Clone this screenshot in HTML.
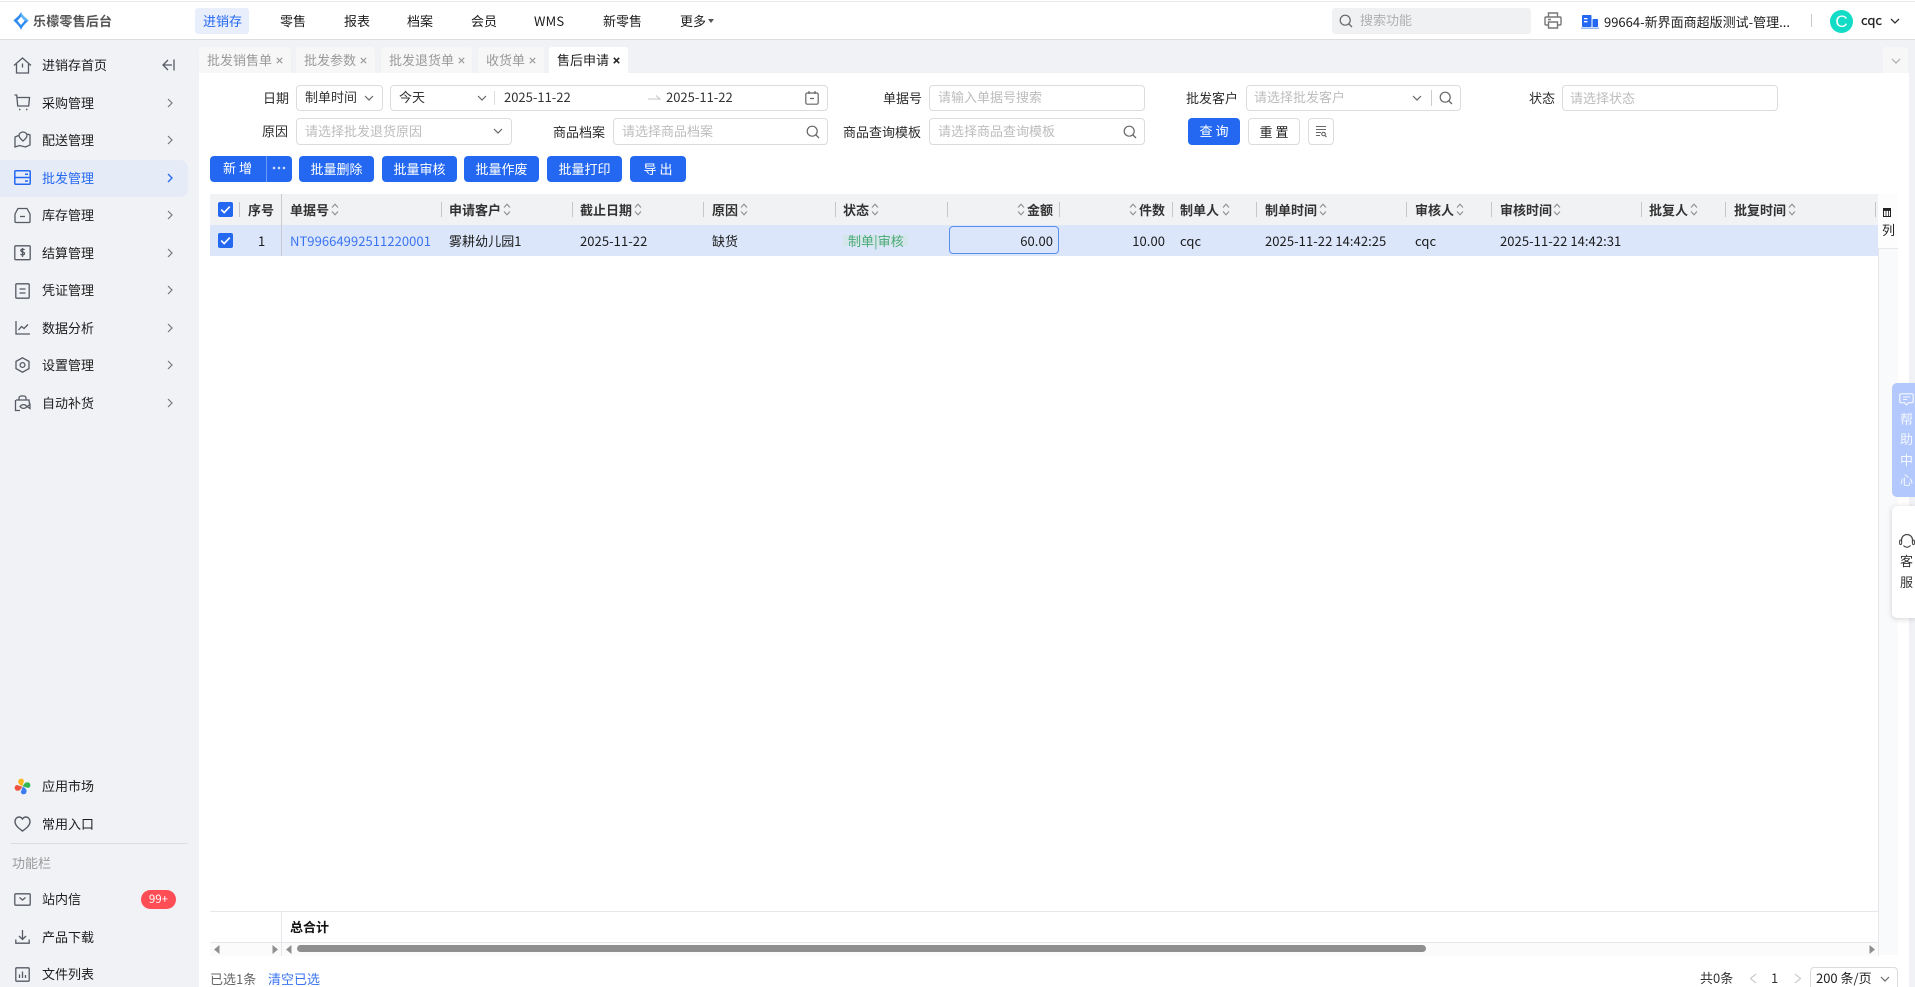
<!DOCTYPE html>
<html lang="zh-CN"><head><meta charset="utf-8"><title>售后申请</title>
<style>
html,body{margin:0;padding:0;width:1915px;height:987px;overflow:hidden;background:#fff}
body{position:relative;font-family:"Liberation Sans","Noto Sans CJK SC",sans-serif;font-size:13px;color:#222}
.n{font-family:"Noto Sans CJK SC","Liberation Sans",sans-serif}
*{box-sizing:border-box}
.a{position:absolute}
.t{position:absolute;white-space:nowrap;line-height:20px;font-size:13px;font-family:"Noto Sans CJK SC","Liberation Sans",sans-serif;color:#1c1c1c}
.ph{color:#bdbdbd}
.lb{color:#2c2c2c}
.box{position:absolute;background:#fff;border:1px solid #dcdcdc;border-radius:4px;height:27px}
.tab{position:absolute;top:47px;height:26px;background:#f7f7f8;border-radius:3px 3px 0 0;color:#9a9a9a;font-size:13px;line-height:25px;font-family:"Noto Sans CJK SC",sans-serif;padding-left:8px;white-space:nowrap}
.tab svg{display:inline-block;margin-left:4px;vertical-align:1.5px}
.btn{position:absolute;top:156px;height:26px;background:#2468f2;border-radius:4px;color:#fff;text-align:center;line-height:25px;font-family:"Noto Sans CJK SC",sans-serif;font-size:13px}
.h{position:absolute;top:200px;line-height:20px;font-size:13px;font-weight:700;color:#333;white-space:nowrap;font-family:"Noto Sans CJK SC",sans-serif}
.s{position:absolute;top:202px;width:1px;height:15px;background:#c4c6c9}
.so{position:absolute;top:202px;width:8px;height:15px}
.r{position:absolute;top:231px;line-height:20px;font-size:13px;color:#1c1c1c;white-space:nowrap;letter-spacing:.06px;font-family:"Noto Sans CJK SC",sans-serif}
.ic{position:absolute;fill:none;stroke:#555a64;stroke-width:1.3}
</style></head><body>
<svg width="0" height="0" style="position:absolute"><defs>
<symbol id="sort" viewBox="0 0 8 15"><path d="M1 5.500 4 2.200 7 5.500M1 9.500 4 12.800 7 9.500" fill="none" stroke="#8d8f93" stroke-width="1.100"/></symbol>
<symbol id="chk" viewBox="0 0 15 15"><rect width="15" height="15" rx="2" fill="#2468f2"/><path d="M3.200 7.600 6.200 10.600 11.800 4.600" fill="none" stroke="#fff" stroke-width="1.600"/></symbol>
<symbol id="search" viewBox="0 0 14 14"><circle cx="6.200" cy="6.200" r="5" fill="none" stroke="#666" stroke-width="1.200"/><path d="M9.800 9.800 13 13" stroke="#666" stroke-width="1.300"/></symbol>
<symbol id="right" viewBox="0 0 6 10"><path d="M1 1 5 5 1 9" fill="none" stroke="#777" stroke-width="1.200"/></symbol>
<symbol id="down" viewBox="0 0 10 6"><path d="M1 1 5 5 9 1" fill="none" stroke="#666" stroke-width="1.200"/></symbol>
<symbol id="x" viewBox="0 0 7 7"><path d="M.8 .8 6.200 6.200M6.200 .8 .8 6.200" fill="none" stroke="#9a9a9a" stroke-width="1.100"/></symbol>
<symbol id="xa" viewBox="0 0 7 7"><path d="M.8 .8 6.200 6.200M6.200 .8 .8 6.200" fill="none" stroke="#222" stroke-width="1.500"/></symbol>
</defs></svg>

<!-- top bar -->
<div class="a" style="left:0;top:1px;width:1915px;height:1px;background:#e8e8e8"></div>
<div class="a" style="left:0;top:39px;width:1915px;height:1px;background:#dcdddf"></div>
<div class="a" style="left:0;top:40px;width:1915px;height:947px;background:#f1f2f5"></div>
<svg class="a" style="left:13px;top:12px" width="16" height="18" viewBox="0 0 16 18"><path d="M8 0C9 3 13 6 15.500 8.500 13 11 9.500 14 8 18 6.500 14 3 11 .5 8.500 3 6 7 3 8 0Z" fill="#2f8bf0"/><path d="M8 4.800 11.600 8.800 8 13 4.400 8.800Z" fill="#fff"/><path d="M8 0C9 3 13 6 15.500 8.500L11.600 8.800 8 4.800Z" fill="#63b6f8"/></svg>
<div class="t" style="left:33px;top:11px;font-weight:700;color:#555;letter-spacing:.2px">乐檬零售后台</div>
<div class="a" style="left:195px;top:8px;width:54px;height:26px;background:#e8eefc;border-radius:3px"></div>
<div class="t" style="left:203px;top:11px;color:#2468f2">进销存</div>
<div class="t" style="left:280px;top:11px">零售</div>
<div class="t" style="left:344px;top:11px">报表</div>
<div class="t" style="left:407px;top:11px">档案</div>
<div class="t" style="left:471px;top:11px">会员</div>
<div class="t" style="left:534px;top:11px;letter-spacing:.2px">WMS</div>
<div class="t" style="left:603px;top:11px">新零售</div>
<div class="t" style="left:680px;top:11px">更多</div>
<svg class="a" style="left:708px;top:19px" width="6" height="4"><path d="M0 0H6L3 4Z" fill="#555"/></svg>
<div class="a" style="left:1332px;top:8px;width:199px;height:26px;background:#f0f1f3;border-radius:3px"></div>
<svg class="a" style="left:1339px;top:14px" width="14" height="14"><use href="#search"/></svg>
<div class="t ph" style="left:1360px;top:10px;color:#b0b0b0">搜索功能</div>
<svg class="ic" style="left:1544px;top:12px;stroke:#777;stroke-width:1.400" width="18" height="17" viewBox="0 0 18 17"><path d="M4.500 5V1h9v4M4 13H2a1 1 0 0 1-1-1V6a1 1 0 0 1 1-1h14a1 1 0 0 1 1 1v6a1 1 0 0 1-1 1h-2"/><path d="M4.500 10h9v6h-9zM4 7.500h3"/></svg>
<svg class="a" style="left:1581px;top:15px" width="18" height="14" viewBox="0 0 18 14"><rect x="1" y="0" width="9.500" height="12" rx="1" fill="#2468f2"/><rect x="11.500" y="4" width="5.500" height="8" rx=".8" fill="#2468f2"/><rect x="3" y="3" width="3.500" height="1.300" fill="#fff"/><rect x="3" y="6" width="3.500" height="1.300" fill="#fff"/><rect x="0" y="12.500" width="18" height="1.400" fill="#8fb3f8"/></svg>
<div class="t" style="left:1604px;top:12px;color:#1c1c1c">99664-新界面商超版测试-管理...</div>
<div class="a" style="left:1811px;top:14px;width:1px;height:13px;background:#c9c9c9"></div>
<div class="a" style="left:1830px;top:10px;width:23px;height:23px;border-radius:50%;background:#12dcc6;color:#fff;text-align:center;font-size:17px;line-height:24px">C</div>
<div class="t" style="left:1861px;top:10px;color:#222;-webkit-text-stroke:.3px #222">cqc</div>
<svg class="a" style="left:1890px;top:18px" width="10" height="6" viewBox="0 0 10 6"><path d="M1 1 5 5 9 1" fill="none" stroke="#333" stroke-width="1.300"/></svg>

<!-- sidebar -->
<div class="a" style="left:0;top:160px;width:188px;height:37px;background:#e6ebf8;border-radius:0 8px 8px 0"></div>
<svg class="ic" style="left:13px;top:57px" width="19" height="17" viewBox="0 0 19 17"><path d="M1 8.500 9.500 1 18 8.500M3.500 7v9h12V7M9.500 6.500v4"/></svg>
<div class="t" style="left:42px;top:55px">进销存首页</div>
<svg class="ic" style="left:162px;top:58px" width="13" height="14" viewBox="0 0 13 14"><path d="M6 2 1 7l5 5M1 7h9M12 1.500v11"/></svg>
<svg class="ic" style="left:14px;top:94px" width="17" height="17" viewBox="0 0 17 17"><path d="M.5 1H2.700l1 11h11l.8-8.500H3"/><path d="M5 15.500h1.400M12 15.500h1.400" stroke-width="1.500"/></svg>
<div class="t" style="left:42px;top:93px">采购管理</div>
<svg class="ic" style="left:14px;top:131px" width="17" height="17" viewBox="0 0 17 17"><path d="M4.500 4.500 1 6v10l4.500-1.500 6 1.500L16 14V4l-2.500-1"/><path d="M9 1c2.500 0 4 1.700 4 3.500 0 2-2.200 4-4 5.500-1.800-1.500-4-3.500-4-5.500C5 2.700 6.500 1 9 1z"/></svg>
<div class="t" style="left:42px;top:130px">配送管理</div>
<svg class="ic" style="left:14px;top:170px;stroke:#2468f2;stroke-width:1.500" width="17" height="15" viewBox="0 0 17 15"><rect x=".8" y=".8" width="15.400" height="13.400" rx="1"/><path d="M.8 7.500h15.400M11 4.200h3M11 11h3"/></svg>
<div class="t" style="left:42px;top:168px;color:#2468f2">批发管理</div>
<svg class="ic" style="left:14px;top:207px" width="17" height="17" viewBox="0 0 17 17"><path d="M4 1.500h9L16 7v7.500a1 1 0 0 1-1 1H2a1 1 0 0 1-1-1V7z"/><path d="M6 9.500h5"/></svg>
<div class="t" style="left:42px;top:205px">库存管理</div>
<svg class="ic" style="left:14px;top:245px" width="17" height="16" viewBox="0 0 17 16"><rect x=".8" y=".8" width="15.400" height="13.900" rx="1"/><path d="M10.500 5C10 4 7 3.800 6.800 5.400c-.2 1.700 3.700 1.300 3.700 3.100 0 1.700-3.400 1.600-4 .5M8.500 3v9"/></svg>
<div class="t" style="left:42px;top:243px">结算管理</div>
<svg class="ic" style="left:15px;top:283px" width="15" height="16" viewBox="0 0 15 16"><rect x=".8" y=".8" width="13.400" height="14.400" rx="1"/><path d="M4.500 6h6M4.500 10h6"/></svg>
<div class="t" style="left:42px;top:280px">凭证管理</div>
<svg class="ic" style="left:15px;top:320px" width="15" height="15" viewBox="0 0 15 15"><path d="M1 1v13h14M3.500 10l3-3.500 2.500 2L13 4.500"/></svg>
<div class="t" style="left:42px;top:318px">数据分析</div>
<svg class="ic" style="left:15px;top:357px" width="15" height="16" viewBox="0 0 15 16"><path d="M7.500 .8 14 4.400v7.200L7.500 15.200 1 11.600V4.400z"/><circle cx="7.500" cy="8" r="2.400"/></svg>
<div class="t" style="left:42px;top:355px">设置管理</div>
<svg class="ic" style="left:14px;top:395px" width="17" height="17" viewBox="0 0 17 17"><path d="M5 5V3a2 2 0 0 1 2-2h3a2 2 0 0 1 2 2v2M2 5h13l.5 4M1.500 5v10.500H6M6 11.500c2-2.500 5-2.500 7 0-2 2.500-5 2.500-7 0z"/><path d="M13 11.500l3-2v4z"/></svg>
<div class="t" style="left:42px;top:393px">自动补货</div>
<svg class="a" style="left:167px;top:98px" width="6" height="10"><use href="#right"/></svg>
<svg class="a" style="left:167px;top:135px" width="6" height="10"><use href="#right"/></svg>
<svg class="a" style="left:167px;top:173px" width="6" height="10" viewBox="0 0 6 10"><path d="M1 1 5 5 1 9" fill="none" stroke="#2468f2" stroke-width="1.300"/></svg>
<svg class="a" style="left:167px;top:210px" width="6" height="10"><use href="#right"/></svg>
<svg class="a" style="left:167px;top:248px" width="6" height="10"><use href="#right"/></svg>
<svg class="a" style="left:167px;top:285px" width="6" height="10"><use href="#right"/></svg>
<svg class="a" style="left:167px;top:323px" width="6" height="10"><use href="#right"/></svg>
<svg class="a" style="left:167px;top:360px" width="6" height="10"><use href="#right"/></svg>
<svg class="a" style="left:167px;top:398px" width="6" height="10"><use href="#right"/></svg>

<svg class="a" style="left:14px;top:778px" width="17" height="17" viewBox="0 0 17 17"><path d="M8.200 8.200C5 7 3 4 5 1.500c2-1.500 4.500-1 5 1.500z" fill="#f9b81f"/><path d="M8.800 8.200C10 5 13 3 15.500 5c1.500 2 1 4.500-1.500 5z" fill="#33b552"/><path d="M8.800 8.800c3.200 1.200 5 4.200 3 6.700-2 1.500-4.500 1-5-1.500z" fill="#3d7df2"/><path d="M8.200 8.800C7 12 4 14 1.500 12-.0 10 .5 7.500 3 7z" fill="#f0523f"/></svg>
<div class="t" style="left:42px;top:776px">应用市场</div>
<svg class="ic" style="left:14px;top:816px;stroke-width:1.400" width="17" height="16" viewBox="0 0 17 16"><path d="M8.500 15C5 12.500 1 9.500 1 5.500 1 2.800 3 1 5 1c1.500 0 2.700.8 3.500 2C9.300 1.800 10.500 1 12 1c2 0 4 1.800 4 4.500 0 4-4 7-7.500 9.500z"/></svg>
<div class="t" style="left:42px;top:814px">常用入口</div>
<div class="a" style="left:11px;top:843px;width:177px;height:1px;background:#dcdde0"></div>
<div class="t" style="left:12px;top:853px;color:#999">功能栏</div>
<svg class="ic" style="left:14px;top:893px" width="17" height="13" viewBox="0 0 17 13"><rect x=".8" y=".8" width="15.400" height="11.400" rx="1"/><path d="M5.500 4.500 8.500 7l3-2.500"/></svg>
<div class="t" style="left:42px;top:889px">站内信</div>
<div class="a n" style="left:141px;top:890px;width:35px;height:19px;background:#ff4d55;border-radius:10px;color:#fff;font-size:11.500px;line-height:18px;text-align:center">99+</div>
<svg class="ic" style="left:15px;top:930px" width="15" height="14" viewBox="0 0 15 14"><path d="M7.500 0v9M4 6l3.500 3.500L11 6M.8 9.500v3.700h13.400V9.500"/></svg>
<div class="t" style="left:42px;top:927px">产品下载</div>
<svg class="ic" style="left:15px;top:967px" width="15" height="15" viewBox="0 0 15 15"><rect x=".8" y=".8" width="13.400" height="13.400" rx="1"/><path d="M4.500 11V7.500M7.500 11V4.500M10.500 11V8"/></svg>
<div class="t" style="left:42px;top:964px">文件列表</div>

<!-- content -->
<div class="a" style="left:199px;top:73px;width:1710px;height:914px;background:#fff"></div>
<div class="tab" style="left:199px;width:92px">批发销售单<svg width="7" height="7"><use href="#x"/></svg></div>
<div class="tab" style="left:296px;width:79px">批发参数<svg width="7" height="7"><use href="#x"/></svg></div>
<div class="tab" style="left:381px;width:91px">批发退货单<svg width="7" height="7"><use href="#x"/></svg></div>
<div class="tab" style="left:478px;width:66px">收货单<svg width="7" height="7"><use href="#x"/></svg></div>
<div class="tab" style="left:549px;width:79px;background:#fff;color:#222">售后申请<svg width="7" height="7"><use href="#xa"/></svg></div>
<div class="a" style="left:1883px;top:47px;width:25px;height:26px;background:#f7f7f8;border-radius:3px 3px 0 0"></div>
<svg class="a" style="left:1891px;top:58px" width="10" height="6" viewBox="0 0 10 6"><path d="M1 1 5 5 9 1" fill="none" stroke="#aaa" stroke-width="1.200"/></svg>

<!-- filters row 1 -->
<div class="t lb" style="left:263px;top:88px">日期</div>
<div class="box" style="left:296px;top:85px;width:87px;height:26px"></div>
<div class="t" style="left:305px;top:87px;color:#333">制单时间</div>
<svg class="a" style="left:364px;top:95px" width="10" height="6"><use href="#down"/></svg>
<div class="box" style="left:390px;top:85px;width:438px;height:26px"></div>
<div class="t" style="left:399px;top:87px;color:#333">今天</div>
<svg class="a" style="left:477px;top:95px" width="10" height="6"><use href="#down"/></svg>
<div class="a" style="left:494px;top:91px;width:1px;height:14px;background:#ddd"></div>
<div class="t" style="left:504px;top:87px;color:#333">2025-11-22</div>
<svg class="a" style="left:648px;top:94px" width="13" height="7"><path d="M0 5H12L8 1.500" fill="none" stroke="#c5c5c5" stroke-width="1"/></svg>
<div class="t" style="left:666px;top:87px;color:#333">2025-11-22</div>
<svg class="ic" style="left:805px;top:91px;stroke:#666;stroke-width:1.200" width="14" height="14" viewBox="0 0 14 14"><rect x=".8" y="2" width="12.400" height="11.200" rx="1.500"/><path d="M4 0v3M10 0v3M5 7.500h4"/></svg>
<div class="t lb" style="left:883px;top:88px">单据号</div>
<div class="box" style="left:929px;top:85px;width:216px;height:26px"></div>
<div class="t ph" style="left:938px;top:87px">请输入单据号搜索</div>
<div class="t lb" style="left:1186px;top:88px">批发客户</div>
<div class="box" style="left:1246px;top:85px;width:215px;height:26px"></div>
<div class="t ph" style="left:1254px;top:87px">请选择批发客户</div>
<svg class="a" style="left:1412px;top:95px" width="10" height="6"><use href="#down"/></svg>
<div class="a" style="left:1431px;top:90px;width:1px;height:16px;background:#ccc"></div>
<svg class="a" style="left:1439px;top:91px" width="14" height="14"><use href="#search"/></svg>
<div class="t lb" style="left:1529px;top:88px">状态</div>
<div class="box" style="left:1562px;top:85px;width:216px;height:26px"></div>
<div class="t ph" style="left:1570px;top:88px">请选择状态</div>

<!-- filters row 2 -->
<div class="t lb" style="left:262px;top:121px">原因</div>
<div class="box" style="left:296px;top:118px;width:216px"></div>
<div class="t ph" style="left:305px;top:121px">请选择批发退货原因</div>
<svg class="a" style="left:493px;top:128px" width="10" height="6"><use href="#down"/></svg>
<div class="t lb" style="left:553px;top:122px">商品档案</div>
<div class="box" style="left:613px;top:118px;width:215px"></div>
<div class="t ph" style="left:622px;top:121px">请选择商品档案</div>
<svg class="a" style="left:806px;top:125px" width="14" height="14"><use href="#search"/></svg>
<div class="t lb" style="left:843px;top:122px">商品查询模板</div>
<div class="box" style="left:929px;top:118px;width:216px"></div>
<div class="t ph" style="left:938px;top:121px">请选择商品查询模板</div>
<svg class="a" style="left:1123px;top:125px" width="14" height="14"><use href="#search"/></svg>
<div class="btn" style="left:1188px;top:118px;width:52px;height:27px;line-height:26px;letter-spacing:3px;text-indent:3px">查询</div>
<div class="box" style="left:1248px;top:118px;width:52px;text-align:center;line-height:25px;color:#222;letter-spacing:3px;text-indent:3px;font-family:'Noto Sans CJK SC',sans-serif">重置</div>
<div class="box" style="left:1308px;top:118px;width:26px"></div>
<svg class="a" style="left:1315px;top:125px" width="12" height="13" viewBox="0 0 12 13"><path d="M1 1.500h10M1 4.500h10M1 7.500h5M1 10.500h4" stroke="#666" stroke-width="1" fill="none"/><circle cx="8.500" cy="9" r="1.800" fill="none" stroke="#555"/><path d="M10 10.500 11.500 12" stroke="#555"/></svg>

<!-- action buttons -->
<div class="btn" style="left:210px;width:82px"></div>
<div class="t" style="left:223px;top:158px;color:#fff;letter-spacing:3px">新增</div>
<div class="a" style="left:266px;top:156px;width:1px;height:26px;background:#6d9bf6"></div>
<div class="a" style="left:272px;top:166px;width:14px;height:4px;background:radial-gradient(circle at 2px 2px,#cfdcfb 1.200px,transparent 1.400px) 0 0/5px 4px"></div>
<div class="btn" style="left:299px;width:75px">批量删除</div>
<div class="btn" style="left:382px;width:75px">批量审核</div>
<div class="btn" style="left:464px;width:75px">批量作废</div>
<div class="btn" style="left:547px;width:75px">批量打印</div>
<div class="btn" style="left:630px;width:56px;letter-spacing:3px;text-indent:3px">导出</div>

<!-- table -->
<div class="a" style="left:210px;top:194px;width:1668px;height:31px;background:#f1f2f4"></div>
<div class="a" style="left:210px;top:225px;width:1668px;height:31px;background:#dbe6fb"></div>
<div class="a" style="left:1878px;top:194px;width:20px;height:761px;background:#f9fafc;border-left:1px solid #e4e5e8"></div>
<div class="a" style="left:1878px;top:194px;width:20px;height:55px;background:#fdfdfe;border-bottom:1px solid #e6e7ea"></div>
<div class="a" style="left:281px;top:194px;width:1px;height:62px;background:#c9cbd0"></div>
<svg class="a" style="left:218px;top:202px" width="15" height="15"><use href="#chk"/></svg>
<svg class="a" style="left:218px;top:233px" width="15" height="15"><use href="#chk"/></svg>
<div class="s" style="left:239px"></div>
<div class="h" style="left:248px">序号</div>
<div class="h" style="left:290px">单据号</div><svg class="so" style="left:331px"><use href="#sort"/></svg>
<div class="s" style="left:441px"></div>
<div class="h" style="left:449px">申请客户</div><svg class="so" style="left:503px"><use href="#sort"/></svg>
<div class="s" style="left:572px"></div>
<div class="h" style="left:580px">截止日期</div><svg class="so" style="left:634px"><use href="#sort"/></svg>
<div class="s" style="left:703px"></div>
<div class="h" style="left:712px">原因</div><svg class="so" style="left:740px"><use href="#sort"/></svg>
<div class="s" style="left:835px"></div>
<div class="h" style="left:843px">状态</div><svg class="so" style="left:871px"><use href="#sort"/></svg>
<div class="s" style="left:947px"></div>
<svg class="so" style="left:1017px"><use href="#sort"/></svg><div class="h" style="left:1027px">金额</div>
<div class="s" style="left:1059px"></div>
<svg class="so" style="left:1129px"><use href="#sort"/></svg><div class="h" style="left:1139px">件数</div>
<div class="s" style="left:1172px"></div>
<div class="h" style="left:1180px">制单人</div><svg class="so" style="left:1222px"><use href="#sort"/></svg>
<div class="s" style="left:1256px"></div>
<div class="h" style="left:1265px">制单时间</div><svg class="so" style="left:1319px"><use href="#sort"/></svg>
<div class="s" style="left:1406px"></div>
<div class="h" style="left:1415px">审核人</div><svg class="so" style="left:1456px"><use href="#sort"/></svg>
<div class="s" style="left:1491px"></div>
<div class="h" style="left:1500px">审核时间</div><svg class="so" style="left:1553px"><use href="#sort"/></svg>
<div class="s" style="left:1641px"></div>
<div class="h" style="left:1649px">批复人</div><svg class="so" style="left:1690px"><use href="#sort"/></svg>
<div class="s" style="left:1725px"></div>
<div class="h" style="left:1734px">批复时间</div><svg class="so" style="left:1788px"><use href="#sort"/></svg>
<div class="s" style="left:1875px"></div>
<svg class="a" style="left:1883px;top:208px" width="8" height="9" viewBox="0 0 8 9"><rect x=".5" y=".5" width="7" height="8" fill="#fff" stroke="#222"/><path d="M0 .5h8v2H0zM3 0v9M5.500 0v9" stroke="#222" stroke-width=".8" fill="#222"/></svg>
<div class="t" style="left:1882px;top:220px">列</div>

<div class="r" style="left:258px">1</div>
<div class="r" style="left:290px;color:#3b74f0">NT99664992511220001</div>
<div class="r" style="left:449px">雾耕幼儿园1</div>
<div class="r" style="left:580px">2025-11-22</div>
<div class="r" style="left:712px">缺货</div>
<div class="a" style="left:843px;top:235px;width:65px;height:11px;background:#d5e6ea"></div>
<div class="r" style="left:848px;color:#4aa97c">制单|审核</div>
<div class="a" style="left:949px;top:226px;width:110px;height:28px;border:1px solid #5a8eee;border-radius:4px"></div>
<div class="r" style="right:862px">60.00</div>
<div class="r" style="right:750px">10.00</div>
<div class="r" style="left:1180px">cqc</div>
<div class="r" style="left:1265px">2025-11-22 14:42:25</div>
<div class="r" style="left:1415px">cqc</div>
<div class="r" style="left:1500px">2025-11-22 14:42:31</div>

<!-- totals -->
<div class="a" style="left:210px;top:911px;width:1668px;height:1px;background:#e6e7ea"></div>
<div class="a" style="left:210px;top:942px;width:1668px;height:1px;background:#e6e7ea"></div>
<div class="a" style="left:281px;top:911px;width:1px;height:45px;background:#e6e7ea"></div>
<div class="a" style="left:1878px;top:911px;width:1px;height:45px;background:#e6e7ea"></div>
<div class="t" style="left:290px;top:917px;font-weight:700;color:#111">总合计</div>
<div class="a" style="left:210px;top:943px;width:71px;height:13px;background:#fbfbfb"></div>
<div class="a" style="left:282px;top:943px;width:1596px;height:13px;background:#fbfbfb"></div>
<svg class="a" style="left:214px;top:945px" width="6" height="9"><path d="M5.500 0V9L0 4.500Z" fill="#8f8f8f"/></svg>
<svg class="a" style="left:272px;top:945px" width="6" height="9"><path d="M.5 0V9L6 4.500Z" fill="#8f8f8f"/></svg>
<svg class="a" style="left:286px;top:945px" width="6" height="9"><path d="M5.500 0V9L0 4.500Z" fill="#8f8f8f"/></svg>
<div class="a" style="left:297px;top:945px;width:1129px;height:7px;background:#8f8f8f;border-radius:4px"></div>
<svg class="a" style="left:1869px;top:945px" width="6" height="9"><path d="M.5 0V9L6 4.500Z" fill="#8f8f8f"/></svg>

<!-- footer -->
<div class="t" style="left:210px;top:969px;color:#666">已选1条</div>
<div class="t" style="left:268px;top:969px;color:#3b74f0">清空已选</div>
<div class="t" style="left:1700px;top:968px;color:#333">共0条</div>
<svg class="a" style="left:1749px;top:973px" width="8" height="11"><path d="M7 1 1.500 5.500 7 10" fill="none" stroke="#c4c4c4" stroke-width="1.100"/></svg>
<div class="t" style="left:1771px;top:968px;color:#333">1</div>
<svg class="a" style="left:1794px;top:973px" width="8" height="11"><path d="M1 1 6.500 5.500 1 10" fill="none" stroke="#c4c4c4" stroke-width="1.100"/></svg>
<div class="a" style="left:1810px;top:967px;width:88px;height:26px;background:#fff;border:1px solid #dcdcdc;border-radius:4px"></div>
<div class="t" style="left:1816px;top:968px;color:#222">200 条/页</div>
<svg class="a" style="left:1880px;top:976px" width="10" height="6"><use href="#down"/></svg>

<!-- floating -->
<div class="a" style="left:1892px;top:383px;width:23px;height:114px;background:#b3c8fd;border-radius:5px 0 0 5px"></div>
<svg class="a" style="left:1899px;top:393px" width="15" height="13" viewBox="0 0 15 13"><path d="M2 .8h11a1.200 1.200 0 0 1 1.200 1.200v6.500a1.200 1.200 0 0 1-1.200 1.200H9.500L7.500 12 5.500 9.700H2A1.200 1.200 0 0 1 .8 8.500V2A1.200 1.200 0 0 1 2 .8z" fill="none" stroke="#f4f7ff" stroke-width="1.200"/><path d="M4 4h7M4 6.500h4" stroke="#f4f7ff" stroke-width="1.100"/></svg>
<div class="t" style="left:1900px;top:409px;color:#f4f7ff">帮</div>
<div class="t" style="left:1900px;top:429px;color:#f4f7ff">助</div>
<div class="t" style="left:1900px;top:450px;color:#f4f7ff">中</div>
<div class="t" style="left:1900px;top:470px;color:#f4f7ff">心</div>
<div class="a" style="left:1892px;top:506px;width:23px;height:112px;background:#fff;border-radius:5px 0 0 5px;box-shadow:0 1px 6px rgba(0,0,0,.18)"></div>
<svg class="a" style="left:1899px;top:534px" width="16" height="16" viewBox="0 0 16 16"><path d="M2.500 8V6a5.500 5.500 0 0 1 11 0v2" fill="none" stroke="#444" stroke-width="1.200"/><rect x=".6" y="6" width="2" height="4.500" rx="1" fill="none" stroke="#444"/><rect x="13.400" y="6" width="2" height="4.500" rx="1" fill="none" stroke="#444"/><path d="M4.500 11.500c1.500 2 5 2.500 7-.2" fill="none" stroke="#444" stroke-width="1.100"/></svg>
<div class="t" style="left:1900px;top:551px;color:#333">客</div>
<div class="t" style="left:1900px;top:572px;color:#333">服</div>
</body></html>
